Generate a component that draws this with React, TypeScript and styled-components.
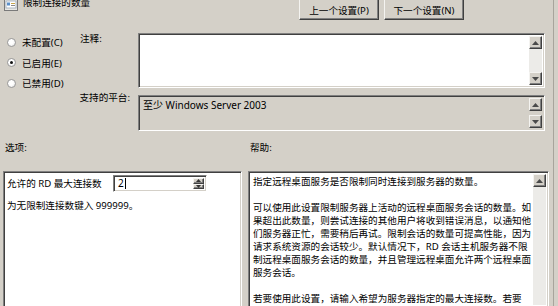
import React from "react";
import styled, { createGlobalStyle, css } from "styled-components";

const FONT = `"Noto Sans", "Noto Sans CJK SC", sans-serif`;

const GlobalStyle = createGlobalStyle`
  html, body { margin: 0; padding: 0; background: #d4d0c8; }
  body { font-family: ${FONT}; }
  * { box-sizing: border-box; }
`;

const sunken = css`
  border: 1px solid;
  border-color: #808080 #ffffff #ffffff #808080;
  box-shadow: inset 1px 1px 0 #404040, inset -1px -1px 0 #d4d0c8;
`;

const raised = css`
  border: 1px solid;
  border-color: #f4f3f0 #404040 #404040 #f4f3f0;
  box-shadow: inset -1px -1px 0 #808080;
`;

const Window = styled.div`
  width: 558px;
  height: 306px;
  overflow: hidden;
  display: flex;
  background: #d4d0c8;
  color: #000;
  font-family: ${FONT};
  font-size: 10px;
`;

const Main = styled.div`
  width: 554px;
  flex: none;
  display: flex;
  flex-direction: column;
  border-right: 1px solid #a8a49c;
`;

const Header = styled.div`
  height: 20px;
  display: flex;
  align-items: flex-start;
`;

const Title = styled.div`
  display: flex;
  align-items: center;
  gap: 5px;
  margin-top: -5px;
  padding-left: 4px;
  line-height: 12px;
  font-size: 9.6px;
  white-space: nowrap;
`;

const NavButtons = styled.div`
  margin-left: auto;
  margin-right: 89px;
  display: flex;
  gap: 5px;
  margin-top: -2px;
`;

const Button = styled.div`
  width: 80px;
  height: 22px;
  display: flex;
  align-items: center;
  justify-content: center;
  background: #d4d0c8;
  font-size: 9.6px;
  padding-top: 1px;
  white-space: nowrap;
  ${raised};
`;

const Settings = styled.div`
  margin-top: 13px;
  display: grid;
  grid-template-columns: 75px 63px 407px;
  grid-template-rows: 55px 36px;
  row-gap: 7px;
`;

const RadioGroup = styled.div`
  grid-column: 1;
  grid-row: 1 / span 2;
  display: flex;
  flex-direction: column;
  margin-top: -1px;
`;

const RadioRow = styled.div`
  height: 20.5px;
  display: flex;
  align-items: center;
  gap: 6px;
  padding-left: 7px;
  font-size: 9.6px;
  white-space: nowrap;
`;

const RadioDot = styled.span<{ $checked?: boolean }>`
  position: relative;
  width: 9px;
  height: 9px;
  border-radius: 50%;
  border: 1px solid #9a9a9a;
  background: radial-gradient(circle at 40% 40%, #ffffff 40%, #dcdcdc 100%);
  flex: none;
  ${(p) =>
    p.$checked &&
    css`
      &::after {
        content: "";
        position: absolute;
        left: 2px;
        top: 2px;
        width: 3px;
        height: 3px;
        border-radius: 50%;
        background: #111;
      }
    `}
`;

const FieldLabel = styled.div<{ $row: number; $right?: boolean; $shift?: number }>`
  grid-column: 2;
  grid-row: ${(p) => p.$row};
  line-height: 12px;
  font-size: 9.6px;
  white-space: nowrap;
  margin-top: ${(p) => p.$shift ?? 0}px;
  padding-left: ${(p) => (p.$right ? 0 : 5)}px;
  padding-right: 8px;
  text-align: ${(p) => (p.$right ? "right" : "left")};
`;

const FieldBox = styled.div<{ $row: number; $white?: boolean }>`
  grid-column: 3;
  grid-row: ${(p) => p.$row};
  display: flex;
  background: ${(p) => (p.$white ? "#ffffff" : "#d4d0c8")};
  padding: 2px;
  ${sunken};
`;

const BoxText = styled.div`
  flex: 1;
  padding: 1px 2px;
  line-height: 12px;
  font-size: 10px;
  white-space: nowrap;
`;

const Scrollbar = styled.div<{ $track: string }>`
  width: 13px;
  flex: none;
  display: flex;
  flex-direction: column;
  justify-content: space-between;
  background: ${(p) => p.$track};
`;

const ScrollBtn = styled.div`
  width: 13px;
  height: 13px;
  display: flex;
  align-items: center;
  justify-content: center;
  background: #d4d0c8;
  ${raised};
`;

const PaneLabels = styled.div`
  margin-top: 11px;
  display: grid;
  grid-template-columns: 245px 1fr;
  padding-left: 5px;
  line-height: 12px;
  font-size: 9.6px;
`;

const Panes = styled.div`
  margin-top: 17px;
  display: flex;
  gap: 6px;
  padding-left: 3px;
  height: 150px;
`;

const OptionsPane = styled.div`
  width: 239px;
  background: #fff;
  padding: 2px 3px;
  ${sunken};
`;

const OptionRow = styled.div`
  display: flex;
  align-items: center;
  padding-top: 1px;
`;

const OptionLabel = styled.div`
  width: 106px;
  flex: none;
  font-size: 9.6px;
  line-height: 12px;
  white-space: nowrap;
`;

const Spinner = styled.div`
  width: 94px;
  height: 17px;
  display: flex;
  align-items: stretch;
  background: #fff;
  padding: 2px;
  ${sunken};
`;

const SpinValue = styled.div`
  flex: 1;
  display: flex;
  align-items: center;
  padding-left: 2px;
  font-size: 10px;
  line-height: 11px;
`;

const Caret = styled.span`
  width: 1px;
  height: 11px;
  background: #000;
  margin-left: 1px;
`;

const SpinButtons = styled.div`
  width: 11px;
  display: flex;
  flex-direction: column;
`;

const SpinBtn = styled.div`
  flex: 1;
  display: flex;
  align-items: center;
  justify-content: center;
  background: #d4d0c8;
  ${raised};
`;

const OptionNote = styled.div`
  margin-top: 8px;
  font-size: 9.6px;
  line-height: 12px;
  white-space: nowrap;
`;

const HelpPane = styled.div`
  width: 301px;
  display: flex;
  background: #fff;
  padding: 2px;
  ${sunken};
`;

const HelpText = styled.div`
  flex: 1;
  padding: 1px 0 0 2px;
  font-size: 9.6px;
  line-height: 13px;
  white-space: nowrap;
`;

const HelpLine = styled.div`
  height: 13px;
`;

const RightGap = styled.div`
  flex: 1;
  background: #d4d0c8;
`;

const Arrow = ({ down }: { down?: boolean }) => (
  <svg width="7" height="4" viewBox="0 0 7 4">
    <path d={down ? "M0 0h7L3.5 4z" : "M3.5 0L7 4H0z"} fill="#4a4a4a" />
  </svg>
);

const SmallArrow = ({ down }: { down?: boolean }) => (
  <svg width="5" height="3" viewBox="0 0 5 3">
    <path d={down ? "M0 0h5L2.5 3z" : "M2.5 0L5 3H0z"} fill="#333" />
  </svg>
);

const PolicyIcon = () => (
  <svg width="14" height="16" viewBox="0 0 14 16">
    <rect x="0.5" y="0.5" width="13" height="15" fill="#e8e8e4" stroke="#7a7a7a" />
    <rect x="2" y="6" width="10" height="7" fill="#ffffff" stroke="#9aa6b4" strokeWidth="0.8" />
    <rect x="3" y="7.5" width="3" height="3" fill="#5b8fc9" />
    <rect x="7" y="8" width="4" height="1" fill="#c9a64a" />
    <rect x="7" y="10" width="4" height="1" fill="#8a8a8a" />
  </svg>
);

const helpLines = [
  "指定远程桌面服务是否限制同时连接到服务器的数量。",
  "",
  "可以使用此设置限制服务器上活动的远程桌面服务会话的数量。如",
  "果超出此数量，则尝试连接的其他用户将收到错误消息，以通知他",
  "们服务器正忙，需要稍后再试。限制会话的数量可提高性能，因为",
  "请求系统资源的会话较少。默认情况下，RD 会话主机服务器不限",
  "制远程桌面服务会话的数量，并且管理远程桌面允许两个远程桌面",
  "服务会话。",
  "",
  "若要使用此设置，请输入希望为服务器指定的最大连接数。若要",
];

export default function App() {
  return (
    <>
      <GlobalStyle />
      <Window>
        <Main>
          <Header>
            <Title>
              <PolicyIcon />
              <span>限制连接的数量</span>
            </Title>
            <NavButtons>
              <Button>上一个设置(P)</Button>
              <Button>下一个设置(N)</Button>
            </NavButtons>
          </Header>

          <Settings>
            <RadioGroup>
              <RadioRow>
                <RadioDot />
                <span>未配置(C)</span>
              </RadioRow>
              <RadioRow>
                <RadioDot $checked />
                <span>已启用(E)</span>
              </RadioRow>
              <RadioRow>
                <RadioDot />
                <span>已禁用(D)</span>
              </RadioRow>
            </RadioGroup>

            <FieldLabel $row={1}>注释:</FieldLabel>
            <FieldBox $row={1} $white>
              <BoxText />
              <Scrollbar $track="#ecebe8">
                <ScrollBtn>
                  <Arrow />
                </ScrollBtn>
                <ScrollBtn>
                  <Arrow down />
                </ScrollBtn>
              </Scrollbar>
            </FieldBox>

            <FieldLabel $row={2} $right $shift={-3}>
              支持的平台:
            </FieldLabel>
            <FieldBox $row={2}>
              <BoxText>至少 Windows Server 2003</BoxText>
              <Scrollbar $track="#d4d0c8">
                <ScrollBtn>
                  <Arrow />
                </ScrollBtn>
                <ScrollBtn>
                  <Arrow down />
                </ScrollBtn>
              </Scrollbar>
            </FieldBox>
          </Settings>

          <PaneLabels>
            <span>选项:</span>
            <span>帮助:</span>
          </PaneLabels>

          <Panes>
            <OptionsPane>
              <OptionRow>
                <OptionLabel>允许的 RD 最大连接数</OptionLabel>
                <Spinner>
                  <SpinValue>
                    2<Caret />
                  </SpinValue>
                  <SpinButtons>
                    <SpinBtn>
                      <SmallArrow />
                    </SpinBtn>
                    <SpinBtn>
                      <SmallArrow down />
                    </SpinBtn>
                  </SpinButtons>
                </Spinner>
              </OptionRow>
              <OptionNote>为无限制连接数键入 999999。</OptionNote>
            </OptionsPane>

            <HelpPane>
              <HelpText>
                {helpLines.map((l, i) => (
                  <HelpLine key={i}>{l}</HelpLine>
                ))}
              </HelpText>
              <Scrollbar $track="#ecebe8">
                <ScrollBtn>
                  <Arrow />
                </ScrollBtn>
              </Scrollbar>
            </HelpPane>
          </Panes>
        </Main>
        <RightGap />
      </Window>
    </>
  );
}
